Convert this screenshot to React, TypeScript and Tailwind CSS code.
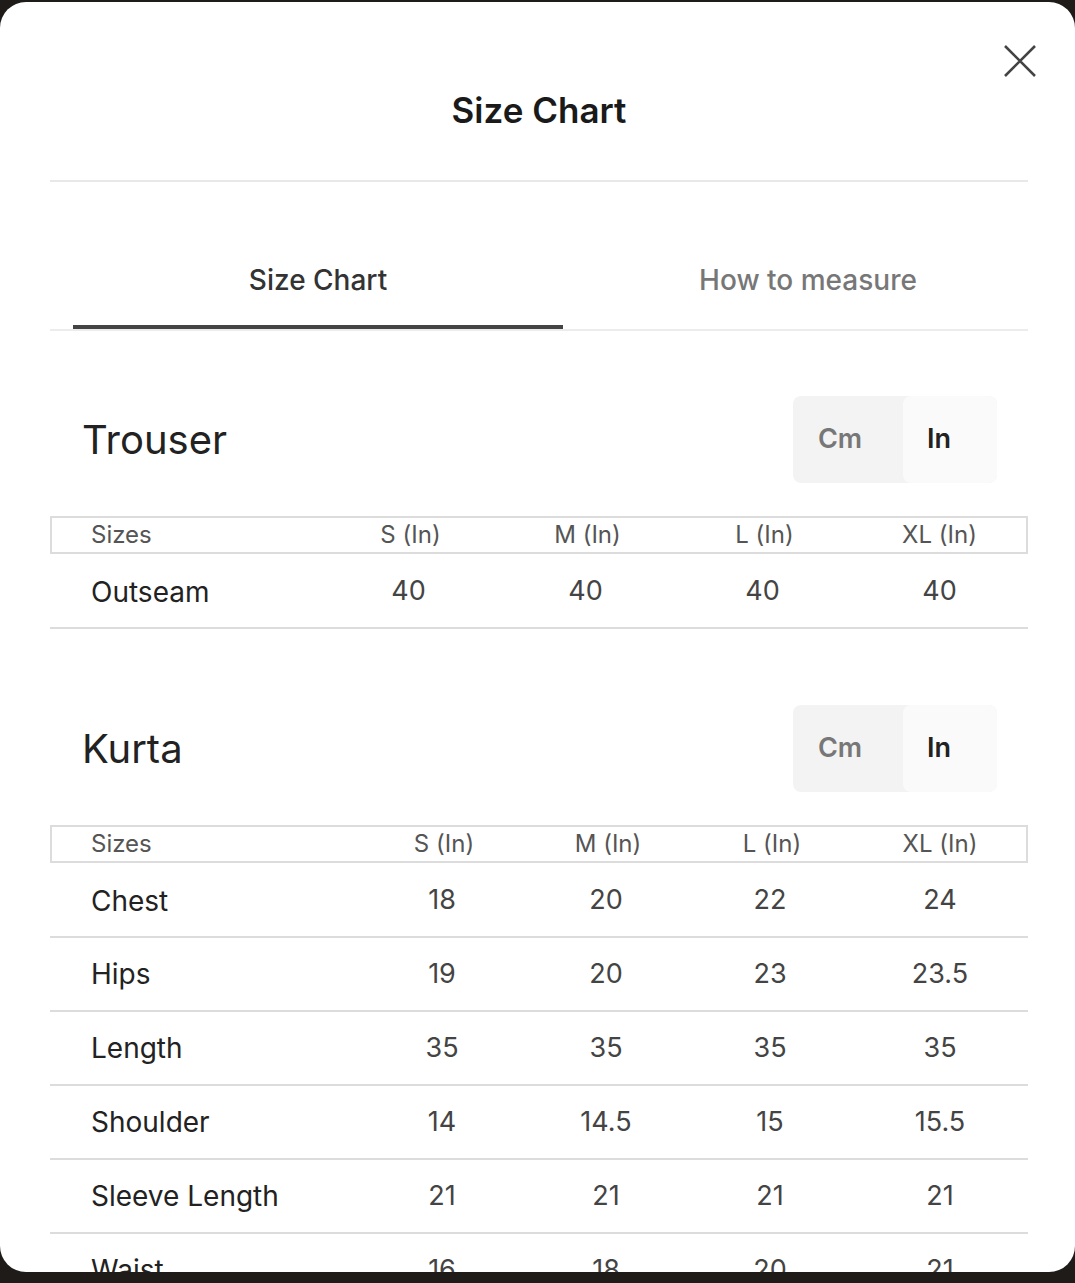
import { useState } from 'react'

type Row = { label: string; values: string[] }

const trouserRows: Row[] = [{ label: 'Outseam', values: ['40', '40', '40', '40'] }]

const kurtaRows: Row[] = [
  { label: 'Chest', values: ['18', '20', '22', '24'] },
  { label: 'Hips', values: ['19', '20', '23', '23.5'] },
  { label: 'Length', values: ['35', '35', '35', '35'] },
  { label: 'Shoulder', values: ['14', '14.5', '15', '15.5'] },
  { label: 'Sleeve Length', values: ['21', '21', '21', '21'] },
  { label: 'Waist', values: ['16', '18', '20', '21'] },
]

const sizes = ['S (In)', 'M (In)', 'L (In)', 'XL (In)']

function UnitToggle() {
  const [unit, setUnit] = useState<'cm' | 'in'>('in')
  return (
    <div className="flex h-[87px] w-[204px] rounded-[8px] bg-[#f3f3f3] overflow-hidden">
      <button
        onClick={() => setUnit('cm')}
        className={`w-[110px] h-full pr-[16px] text-[27px] font-semibold ${unit === 'cm' ? 'bg-[#fafafa] text-[#222] rounded-[8px]' : 'text-[#777]'}`}
      >
        Cm
      </button>
      <button
        onClick={() => setUnit('in')}
        className={`flex-1 h-full pr-[22px] text-[27px] font-semibold ${unit === 'in' ? 'bg-[#fafafa] text-[#222] rounded-[8px]' : 'text-[#777]'}`}
      >
        In
      </button>
    </div>
  )
}

function SizeTable({ title, rows, cols }: { title: string; rows: Row[]; cols: string[] }) {
  return (
    <section>
      <div className="flex items-center justify-between pl-[32px] pr-[31px]">
        <h3 className="text-[40px] text-[#222] leading-none">{title}</h3>
        <UnitToggle />
      </div>

      <div className="mt-[33px]">
        <div className="flex h-[38px] items-center border-2 border-[#dcdcdc] text-[24px] text-[#555]">
          <div className={`${cols[0]} pl-[39px]`}>Sizes</div>
          {sizes.map((s, i) => (
            <div key={s} className={`${cols[i + 1]} text-center`}>{s}</div>
          ))}
        </div>
        {rows.map((r, idx) => (
          <div
            key={r.label}
            className={`flex ${idx === 0 ? 'h-[75px] pt-[2px]' : 'h-[74px]'} items-center border-b-2 border-[#dcdcdc]`}
          >
            <div className={`${cols[0]} pl-[41px] text-[28px] text-[#222]`}>{r.label}</div>
            {r.values.map((v, i) => (
              <div key={i} className={`${cols[i + 1]} text-center text-[27px] text-[#444]`}>{v}</div>
            ))}
          </div>
        ))}
      </div>
    </section>
  )
}

export default function App() {
  const [tab, setTab] = useState(0)
  return (
    <div className="h-[1283px] w-[1075px] bg-[#1e1b19] overflow-hidden" style={{ fontFamily: 'Inter, "Noto Sans", sans-serif' }}>
      <div className="relative mt-[2px] h-[1270px] rounded-[26px] bg-white overflow-hidden pl-[50px] pr-[47px]">
        <button className="absolute top-[41px] right-[37px] text-[#444]" aria-label="Close">
          <svg width="36" height="36" viewBox="0 0 36 36" fill="none" stroke="currentColor" strokeWidth="2.6">
            <path d="M3 3 L33 33 M33 3 L3 33" />
          </svg>
        </button>

        <div className="h-[178px] pt-[38px] flex items-center justify-center">
          <h2 className="text-[35px] font-semibold text-[#1a1a1a]">Size Chart</h2>
        </div>
        <div className="h-[2px] bg-[#e8e8e8]" />

        <div className="ml-[23px] -mr-[25px] mt-[64px] flex">
          {['Size Chart', 'How to measure'].map((t, i) => (
            <button
              key={t}
              onClick={() => setTab(i)}
              className={`flex-1 pt-[16px] pb-[27px] leading-[36px] text-[28px] font-medium border-b-4 ${tab === i ? 'border-[#444] text-[#333]' : 'border-transparent text-[#777]'}`}
            >
              {t}
            </button>
          ))}
        </div>
        <div className="h-[2px] bg-[#ececec]" />

        <div className="mt-[65px]">
          <SizeTable
            title="Trouser"
            rows={trouserRows}
            cols={['w-[270px]', 'w-[177px]', 'w-[177px]', 'w-[177px]', 'flex-1']}
          />
        </div>

        <div className="mt-[76px]">
          <SizeTable
            title="Kurta"
            rows={kurtaRows}
            cols={['w-[310px]', 'w-[164px]', 'w-[164px]', 'w-[164px]', 'flex-1']}
          />
        </div>
      </div>
    </div>
  )
}
